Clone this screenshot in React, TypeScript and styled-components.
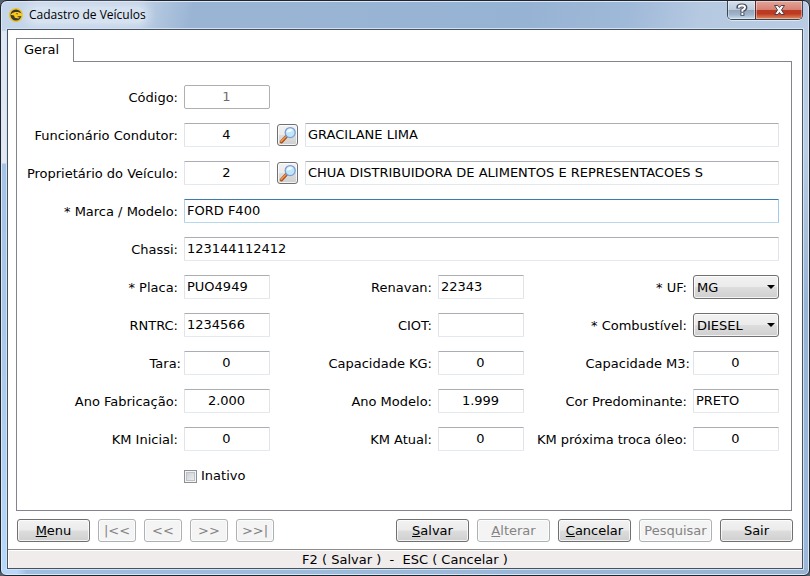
import React, { useId } from "react";
import styled, { createGlobalStyle, css } from "styled-components";

const GlobalStyle = createGlobalStyle`
  *, *::before, *::after { box-sizing: border-box; }
  html, body, #root { height: 100%; }
  body { margin: 0; background: #55606c; overflow: hidden; }
  body, button, input, select {
    font-family: "DejaVu Sans", Verdana, sans-serif;
    font-size: 13px;
    line-height: 16px;
    color: #000;
  }
`;

const Frame = styled.div`
  display: flex;
  flex-direction: column;
  min-height: 100%;
  padding: 0 6px 6px;
  border: 1px solid #20242e;
  border-radius: 7px 7px 6px 6px;
  box-shadow: inset 0 0 0 1px #dbe8f6;
  background:
    linear-gradient(to right, #b9d7f8 0, #b9d7f8 16px, transparent 26px) bottom left / 100% 7px no-repeat,
    linear-gradient(to right, #9fbfe0, #98b3d2) bottom left / 100% 7px no-repeat,
    linear-gradient(100deg, #c6d6ea 0, #bccee4 140px, #9ab5d4 190px, #97b3d3 520px, #9fb9d8 620px, #b5c9e1 690px, #b9cce3 100%) top / 100% 30px no-repeat,
    linear-gradient(to bottom, #dce7f5 0, #e4e8f3 162px, #a5c3e6 163px, #a9c8ea 330px, #b6d8fa 100%) left / 8px 100% no-repeat,
    linear-gradient(to bottom, #b9cce3 0, #b9cde4 150px, #98b4d5 300px, #9bb8da 100%);
`;

const TitleBar = styled.header`
  display: flex;
  align-items: flex-start;
  height: 28px;
  padding-left: 1px;
`;

const Caption = styled.h1`
  display: flex;
  align-items: center;
  gap: 5px;
  flex: 1;
  height: 28px;
  margin: 0;
  font: 400 12px/16px "Open Sans", "Segoe UI", sans-serif;
`;

const CaptionText = styled.span`
  border-radius: 8px;
  background: rgba(226, 235, 246, 0.65);
  box-shadow: 0 0 8px 4px rgba(226, 235, 246, 0.65);
`;

const WindowButtons = styled.div`
  display: flex;
  height: 19px;
  border: 1px solid #3a4554;
  border-top: 0;
  border-radius: 0 0 5px 5px;
  overflow: hidden;
  box-shadow: 0 1px 0 #dde8f4;
`;

const WindowButton = styled.button<{ $close?: boolean }>`
  display: flex;
  align-items: center;
  justify-content: center;
  width: ${(p) => (p.$close ? 47 : 27)}px;
  padding: 0;
  border: 0;
  border-left: ${(p) => (p.$close ? "1px solid #5a2a2c" : "0")};
  background: ${(p) =>
    p.$close
      ? "linear-gradient(to bottom, #e5a498 0, #d58273 48%, #b83a25 50%, #bd3a20 70%, #e08a5f 100%)"
      : "linear-gradient(to bottom, #d3dfeb 0, #bccbdb 48%, #92a5ba 50%, #9fb4ca 75%, #c9dcec 100%)"};
  box-shadow: inset 0 0 0 1px rgba(255, 255, 255, 0.4);
`;

const Client = styled.main`
  display: flex;
  flex-direction: column;
  flex: 1;
  border: 1px solid #47525f;
  background: #fff;
  box-shadow: 0 0 0 1px #d3e2f2;
`;

const Body = styled.form`
  display: flex;
  flex-direction: column;
  flex: 1;
  padding: 8px 9px 7px 8px;
`;

const TabList = styled.div`
  display: flex;
`;

const Tab = styled.button`
  position: relative;
  z-index: 1;
  width: 58px;
  height: 24px;
  margin-bottom: -1px;
  padding: 0 0 1px 7px;
  border: 1px solid #84848e;
  border-bottom: 0;
  background: #fff;
  text-align: left;
`;

const TabPanel = styled.section`
  flex: 1;
  margin-right: 1px;
  padding: 23px 12px 0 0;
  border: 1px solid #84848e;
`;

const Fields = styled.div`
  display: grid;
  grid-template-columns: 167px 86px minmax(168px, 1fr) 86px minmax(169px, 1fr) 86px;
  grid-auto-rows: 24px;
  row-gap: 14px;
  align-items: center;
`;

const Label = styled.label<{ $near?: boolean }>`
  padding-top: 1px;
  padding-right: ${(p) => (p.$near ? 3 : 6)}px;
  text-align: right;
  white-space: nowrap;
`;

const TextBox = styled.input<{ $center?: boolean; $focus?: boolean }>`
  width: 100%;
  min-width: 0;
  height: 24px;
  padding: 0 3px 2px 2px;
  border: 1px solid;
  border-color: #abadb3 #e2e3ea #e3e9ef #e2e3ea;
  border-radius: 1px;
  background: #fff;
  text-align: ${(p) => (p.$center ? "center" : "left")};
  outline: 0;
  ${(p) =>
    p.$focus &&
    css`
      border-color: #3d7bad #a4c9e3 #b7d9ed #b5cfe7;
    `}
  &:disabled {
    border-color: #afafaf;
    border-radius: 2px;
    color: #6d6d6d;
  }
`;

const Span = styled.div<{ $lookup?: boolean }>`
  grid-column: span ${(p) => (p.$lookup ? 4 : 5)};
  display: flex;
  align-items: center;
  gap: 7px;
  padding-left: ${(p) => (p.$lookup ? 7 : 0)}px;
`;

const raised = css`
  border: 1px solid #707070;
  border-radius: 3px;
  background: linear-gradient(to bottom, #f2f2f2 0, #ebebeb 48%, #dddddd 52%, #cfcfcf 100%);
  box-shadow: inset 0 0 0 1px rgba(255, 255, 255, 0.75);
`;

const LookupButton = styled.button`
  ${raised}
  display: flex;
  flex: none;
  align-items: center;
  justify-content: center;
  width: 21px;
  height: 22px;
  padding: 0;
`;

const SelectBox = styled.div`
  display: grid;
  align-items: center;
  &::after {
    content: "";
    grid-area: 1 / 1;
    justify-self: end;
    margin-right: 4px;
    border: 4px solid transparent;
    border-top-color: #000;
    border-bottom: 0;
    pointer-events: none;
    z-index: 1;
  }
`;

const Select = styled.select`
  ${raised}
  grid-area: 1 / 1;
  appearance: none;
  width: 100%;
  height: 24px;
  padding: 1px 14px 0 3px;
`;

const CheckRow = styled.label`
  grid-column: 2 / span 3;
  display: flex;
  align-items: center;
  gap: 4px;
  padding-bottom: 2px;
`;

const CheckBox = styled.input`
  appearance: none;
  width: 13px;
  height: 13px;
  margin: 0;
  border: 1px solid #8e8f8f;
  background: linear-gradient(135deg, #c4c9d0, #f4f4f4);
  box-shadow: inset 0 0 0 1px #f4f4f4, inset 0 0 0 2px #bcc2c9;
`;

const Footer = styled.div`
  display: flex;
  justify-content: space-between;
  padding: 8px 0 0 1px;
`;

const ButtonGroup = styled.div`
  display: flex;
  gap: 8px;
`;

const Button = styled.button<{ $small?: boolean }>`
  ${raised}
  width: ${(p) => (p.$small ? 38 : 73)}px;
  height: 23px;
  padding: 0;
  white-space: nowrap;
  &:disabled {
    border-color: #adb2b5;
    background: #f4f4f4;
    color: #838383;
  }
`;

const StatusBar = styled.footer`
  height: 19px;
  border-top: 1px solid #8c8c8c;
  box-shadow: inset 0 1px 0 #fff, inset 1px 0 0 #fff;
  background: #f0ecec;
  text-align: center;
  line-height: 19px;
  white-space: pre;
`;

function AppIcon() {
  return (
    <svg width="16" height="16" viewBox="0 0 16 16" aria-hidden="true">
      <circle cx="8" cy="8" r="6.3" fill="#3a3834" stroke="#f0c41c" strokeWidth="1.5" />
      <path d="M2.4 7.8Q4 5.2 7 4.9l3.2.2 3 1.2 1.2 1.5-.8 1.3-3 .1-1.6.5 2.8 1-1.6.8-3.4-.8L6 8.6z" fill="#f8ca18" />
      <path d="M8.2 6.6l1.8.2" stroke="#3a3834" strokeWidth="0.8" />
    </svg>
  );
}

function HelpGlyph() {
  return (
    <svg width="12" height="14" viewBox="0 0 12 14" fill="none" aria-hidden="true">
      <path d="M2.4 5.6V4Q2.4 2.4 6 2.4T9.4 4.6Q9.4 6.2 6.4 7.2V9M6.4 9.6v3.2" stroke="#45495c" strokeWidth="4" />
      <path d="M2.9 4.8V4Q3 2.6 6 2.6T9 4.6Q9 6 6.4 7.2V8.8M6.4 10v2" stroke="#fff" strokeWidth="2" />
    </svg>
  );
}

function CloseGlyph() {
  return (
    <svg width="13" height="12" viewBox="0 0 13 12" aria-hidden="true">
      <path d="M1.5 1.5h3.4l1.6 2 1.6-2h3.4L8.5 6l3 4.5H8.1l-1.6-2-1.6 2H1.5l3-4.5z" fill="#f5f5f5" stroke="#4b414d" />
    </svg>
  );
}

function Magnifier() {
  return (
    <svg width="18" height="18" viewBox="0 0 18 18" aria-hidden="true">
      <path d="M7.4 10.4L2.4 15.8" stroke="#a54d1d" strokeWidth="3.2" strokeLinecap="round" />
      <path d="M6.6 10.8L2.2 15.4" stroke="#f0954a" strokeWidth="1.6" strokeLinecap="round" />
      <path d="M8.2 9.6L7 10.9" stroke="#7f8d9b" strokeWidth="2" />
      <circle cx="11.2" cy="6.6" r="5" fill="#bfe6fb" stroke="#7f9fd0" strokeWidth="1.3" />
      <path d="M7.5 6.2a3.8 3.8 0 0 1 6.4-2.3Q12 7 7.5 6.2z" fill="#eefaff" />
    </svg>
  );
}

type FieldProps = {
  label: string;
  value: string;
  center?: boolean;
  disabled?: boolean;
  near?: boolean;
};

function Field({ label, value, center, disabled, near }: FieldProps) {
  const id = useId();
  return (
    <>
      <Label htmlFor={id} $near={near}>{label}</Label>
      <TextBox id={id} defaultValue={value} $center={center} disabled={disabled} />
    </>
  );
}

function WideField({ label, value, focus }: { label: string; value: string; focus?: boolean }) {
  const id = useId();
  return (
    <>
      <Label htmlFor={id}>{label}</Label>
      <Span>
        <TextBox id={id} defaultValue={value} $focus={focus} />
      </Span>
    </>
  );
}

function LookupField({ label, code, name }: { label: string; code: string; name: string }) {
  return (
    <>
      <Field label={label} value={code} center />
      <Span $lookup>
        <LookupButton type="button" aria-label="Pesquisar">
          <Magnifier />
        </LookupButton>
        <TextBox defaultValue={name} aria-label={label} />
      </Span>
    </>
  );
}

function SelectField({ label, value }: { label: string; value: string }) {
  const id = useId();
  return (
    <>
      <Label htmlFor={id}>{label}</Label>
      <SelectBox>
        <Select id={id} defaultValue={value}>
          <option>{value}</option>
        </Select>
      </SelectBox>
    </>
  );
}

export default function App() {
  return (
    <>
      <GlobalStyle />
      <Frame>
        <TitleBar>
          <Caption>
            <AppIcon />
            <CaptionText>Cadastro de Veículos</CaptionText>
          </Caption>
          <WindowButtons>
            <WindowButton type="button" aria-label="Ajuda"><HelpGlyph /></WindowButton>
            <WindowButton type="button" aria-label="Fechar" $close><CloseGlyph /></WindowButton>
          </WindowButtons>
        </TitleBar>
        <Client>
          <Body onSubmit={(e) => e.preventDefault()}>
            <TabList role="tablist">
              <Tab type="button" role="tab" aria-selected="true">Geral</Tab>
            </TabList>
            <TabPanel role="tabpanel">
              <Fields>
                <Field label="Código:" value="1" center disabled />
                <Span $lookup />
                <LookupField label="Funcionário Condutor:" code="4" name="GRACILANE LIMA" />
                <LookupField
                  label="Proprietário do Veículo:"
                  code="2"
                  name="CHUA DISTRIBUIDORA DE ALIMENTOS E REPRESENTACOES S"
                />
                <WideField label="* Marca / Modelo:" value="FORD F400" focus />
                <WideField label="Chassi:" value="123144112412" />
                <Field label="* Placa:" value="PUO4949" />
                <Field label="Renavan:" value="22343" />
                <SelectField label="* UF:" value="MG" />
                <Field label="RNTRC:" value="1234566" />
                <Field label="CIOT:" value="" />
                <SelectField label="* Combustível:" value="DIESEL" />
                <Field label="Tara:" value="0" center near />
                <Field label="Capacidade KG:" value="0" center />
                <Field label="Capacidade M3:" value="0" center near />
                <Field label="Ano Fabricação:" value="2.000" center />
                <Field label="Ano Modelo:" value="1.999" center />
                <Field label="Cor Predominante:" value="PRETO" />
                <Field label="KM Inicial:" value="0" center />
                <Field label="KM Atual:" value="0" center />
                <Field label="KM próxima troca óleo:" value="0" center />
                <CheckRow>
                  <CheckBox type="checkbox" />
                  Inativo
                </CheckRow>
              </Fields>
            </TabPanel>
            <Footer>
              <ButtonGroup>
                <Button type="button"><u>M</u>enu</Button>
                <Button type="button" $small disabled>|&lt;&lt;</Button>
                <Button type="button" $small disabled>&lt;&lt;</Button>
                <Button type="button" $small disabled>&gt;&gt;</Button>
                <Button type="button" $small disabled>&gt;&gt;|</Button>
              </ButtonGroup>
              <ButtonGroup>
                <Button type="submit"><u>S</u>alvar</Button>
                <Button type="button" disabled><u>A</u>lterar</Button>
                <Button type="button"><u>C</u>ancelar</Button>
                <Button type="button" disabled>Pesquisar</Button>
                <Button type="button">Sair</Button>
              </ButtonGroup>
            </Footer>
          </Body>
          <StatusBar>{"F2 ( Salvar )  -  ESC ( Cancelar )"}</StatusBar>
        </Client>
      </Frame>
    </>
  );
}
